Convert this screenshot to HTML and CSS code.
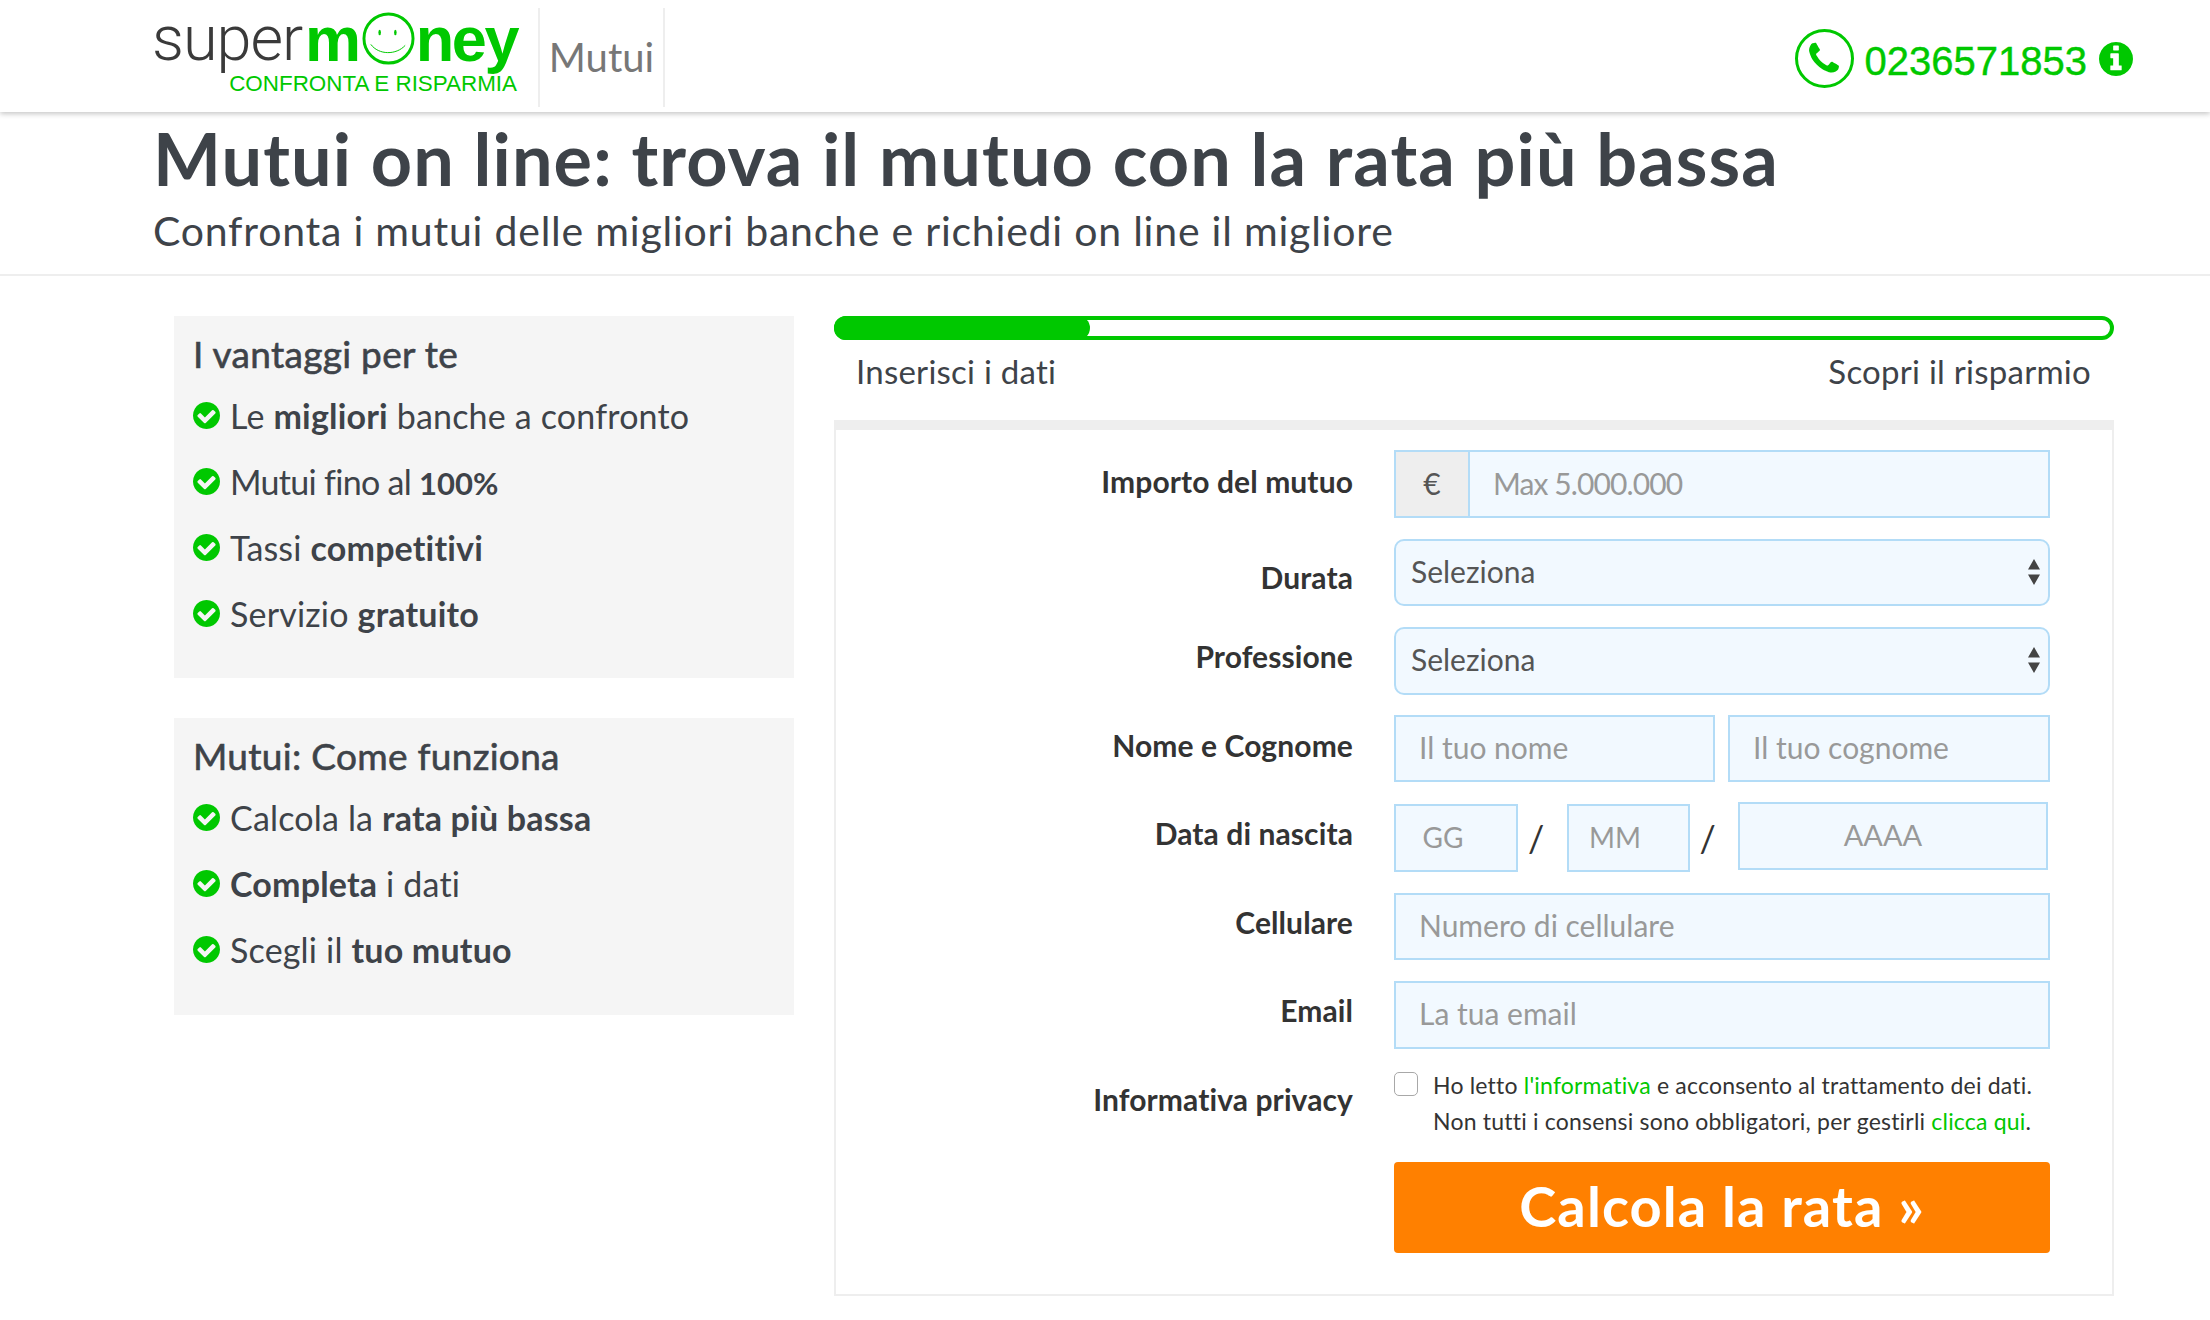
FILE: index.html
```html
<!DOCTYPE html>
<html lang="it">
<head>
<meta charset="utf-8">
<title>Mutui on line</title>
<link rel="stylesheet" href="styles.css">
</head>
<body>
<header class="topbar">
  <div class="brand">
    <div class="logo">
      <div class="logo-word">
        <span class="logo-super">super</span><span class="logo-green">m</span><svg class="smiley" viewBox="0 0 54 54" aria-hidden="true"><circle cx="27" cy="27" r="25" fill="none" stroke="#00c800" stroke-width="3"/><ellipse cx="18" cy="21" rx="1.3" ry="2.8" fill="#00c800"/><ellipse cx="34" cy="21" rx="1.3" ry="2.8" fill="#00c800"/><path d="M9 33 C17 44 35 44 44 34" fill="none" stroke="#00c800" stroke-width="1"/></svg><span class="logo-green logo-ney">ney</span>
      </div>
      <div class="logo-claim">CONFRONTA E RISPARMIA</div>
    </div>
    <div class="section-name">Mutui</div>
  </div>
  <div class="phone">
    <span class="phone-ring"><svg viewBox="0 0 1792 1792" aria-hidden="true"><path d="M1600 1240q0 27-10 70.5t-21 68.5q-21 50-122 106-94 51-186 51-27 0-53-3.5t-57.5-12.5-47-14.5-55.5-20.5-49-18q-98-35-175-83-127-79-264-216t-216-264q-48-77-83-175-3-9-18-49t-20.5-55.5-14.5-47-12.5-57.5-3.5-53q0-92 51-186 56-101 106-122 25-11 68.5-21t70.5-10q14 0 21 3 18 6 53 76 11 19 30 54t35 63.5 31 53.5q3 4 17.5 25t21.5 35.5 7 28.5q0 20-28.5 50t-62 55-62 53-28.5 46q0 9 5 22.5t8.5 20.5 14 24 11.5 19q76 137 174 235t235 174q2 1 19 11.5t24 14 20.5 8.5 22.5 5q18 0 46-28.5t53-62 55-62 50-28.5q14 0 28.5 7t35.5 21.5 25 17.5q25 15 53.5 31t63.5 35 54 30q70 35 76 53 3 7 3 21z"/></svg></span>
    <span class="phone-number">0236571853</span>
    <svg class="phone-info" viewBox="128 128 1536 1536" aria-hidden="true"><path d="M1152 1376v-160q0-14-9-23t-23-9h-96v-512q0-14-9-23t-23-9h-320q-14 0-23 9t-9 23v160q0 14 9 23t23 9h96v320h-96q-14 0-23 9t-9 23v160q0 14 9 23t23 9h448q14 0 23-9t9-23zm-128-896v-160q0-14-9-23t-23-9h-192q-14 0-23 9t-9 23v160q0 14 9 23t23 9h192q14 0 23-9t9-23zm640 416q0 209-103 385.5t-279.5 279.5-385.5 103-385.5-103-279.5-279.5-103-385.5 103-385.5 279.5-279.5 385.5-103 385.5 103 279.5 279.5 103 385.5z"/></svg>
  </div>
</header>

<section class="hero">
  <h1>Mutui on line: trova il mutuo con la rata più bassa</h1>
  <p>Confronta i mutui delle migliori banche e richiedi on line il migliore</p>
</section>

<main class="main">
  <aside class="sidebar">
    <div class="box box-benefits">
      <h2>I vantaggi per te</h2>
      <ul>
        <li><svg class="check" viewBox="128 128 1536 1536" aria-hidden="true"><path d="M1412 734q0-28-18-46l-91-90q-19-19-45-19t-45 19l-408 407-226-226q-19-19-45-19t-45 19l-91 90q-18 18-18 46 0 27 18 45l362 362q19 19 45 19 27 0 46-19l543-543q18-18 18-45zm252 162q0 209-103 385.5t-279.5 279.5-385.5 103-385.5-103-279.5-279.5-103-385.5 103-385.5 279.5-279.5 385.5-103 385.5 103 279.5 279.5 103 385.5z"/></svg><span>Le <b>migliori</b> banche a confronto</span></li>
        <li><svg class="check" viewBox="128 128 1536 1536" aria-hidden="true"><path d="M1412 734q0-28-18-46l-91-90q-19-19-45-19t-45 19l-408 407-226-226q-19-19-45-19t-45 19l-91 90q-18 18-18 46 0 27 18 45l362 362q19 19 45 19 27 0 46-19l543-543q18-18 18-45zm252 162q0 209-103 385.5t-279.5 279.5-385.5 103-385.5-103-279.5-279.5-103-385.5 103-385.5 279.5-279.5 385.5-103 385.5 103 279.5 279.5 103 385.5z"/></svg><span class="tight">Mutui fino al <b class="num">100%</b></span></li>
        <li><svg class="check" viewBox="128 128 1536 1536" aria-hidden="true"><path d="M1412 734q0-28-18-46l-91-90q-19-19-45-19t-45 19l-408 407-226-226q-19-19-45-19t-45 19l-91 90q-18 18-18 46 0 27 18 45l362 362q19 19 45 19 27 0 46-19l543-543q18-18 18-45zm252 162q0 209-103 385.5t-279.5 279.5-385.5 103-385.5-103-279.5-279.5-103-385.5 103-385.5 279.5-279.5 385.5-103 385.5 103 279.5 279.5 103 385.5z"/></svg><span>Tassi <b>competitivi</b></span></li>
        <li><svg class="check" viewBox="128 128 1536 1536" aria-hidden="true"><path d="M1412 734q0-28-18-46l-91-90q-19-19-45-19t-45 19l-408 407-226-226q-19-19-45-19t-45 19l-91 90q-18 18-18 46 0 27 18 45l362 362q19 19 45 19 27 0 46-19l543-543q18-18 18-45zm252 162q0 209-103 385.5t-279.5 279.5-385.5 103-385.5-103-279.5-279.5-103-385.5 103-385.5 279.5-279.5 385.5-103 385.5 103 279.5 279.5 103 385.5z"/></svg><span>Servizio <b>gratuito</b></span></li>
      </ul>
    </div>
    <div class="box box-how">
      <h2>Mutui: Come funziona</h2>
      <ul>
        <li><svg class="check" viewBox="128 128 1536 1536" aria-hidden="true"><path d="M1412 734q0-28-18-46l-91-90q-19-19-45-19t-45 19l-408 407-226-226q-19-19-45-19t-45 19l-91 90q-18 18-18 46 0 27 18 45l362 362q19 19 45 19 27 0 46-19l543-543q18-18 18-45zm252 162q0 209-103 385.5t-279.5 279.5-385.5 103-385.5-103-279.5-279.5-103-385.5 103-385.5 279.5-279.5 385.5-103 385.5 103 279.5 279.5 103 385.5z"/></svg><span>Calcola la <b>rata più bassa</b></span></li>
        <li><svg class="check" viewBox="128 128 1536 1536" aria-hidden="true"><path d="M1412 734q0-28-18-46l-91-90q-19-19-45-19t-45 19l-408 407-226-226q-19-19-45-19t-45 19l-91 90q-18 18-18 46 0 27 18 45l362 362q19 19 45 19 27 0 46-19l543-543q18-18 18-45zm252 162q0 209-103 385.5t-279.5 279.5-385.5 103-385.5-103-279.5-279.5-103-385.5 103-385.5 279.5-279.5 385.5-103 385.5 103 279.5 279.5 103 385.5z"/></svg><span><b>Completa</b> i dati</span></li>
        <li><svg class="check" viewBox="128 128 1536 1536" aria-hidden="true"><path d="M1412 734q0-28-18-46l-91-90q-19-19-45-19t-45 19l-408 407-226-226q-19-19-45-19t-45 19l-91 90q-18 18-18 46 0 27 18 45l362 362q19 19 45 19 27 0 46-19l543-543q18-18 18-45zm252 162q0 209-103 385.5t-279.5 279.5-385.5 103-385.5-103-279.5-279.5-103-385.5 103-385.5 279.5-279.5 385.5-103 385.5 103 279.5 279.5 103 385.5z"/></svg><span>Scegli il <b>tuo mutuo</b></span></li>
      </ul>
    </div>
  </aside>

  <div class="content">
    <div class="progress"><div class="progress-fill"></div></div>
    <div class="steps"><span>Inserisci i dati</span><span>Scopri il risparmio</span></div>
    <form class="panel">
      <div class="row">
        <label class="row-label row-label-first">Importo del mutuo</label>
        <div class="addon-group">
          <span class="addon">€</span>
          <input class="field field-addon" placeholder="Max 5.000.000">
        </div>
      </div>
      <div class="row">
        <label class="row-label row-label-low">Durata</label>
        <div class="select-wrap">
          <select class="field field-select"><option>Seleziona</option></select>
          <svg class="select-arrows" viewBox="0 0 14 26" aria-hidden="true"><path d="M7 0 L13 10.5 H1 Z M7 26 L1 15.5 H13 Z"/></svg>
        </div>
      </div>
      <div class="row">
        <label class="row-label">Professione</label>
        <div class="select-wrap">
          <select class="field field-select"><option>Seleziona</option></select>
          <svg class="select-arrows" viewBox="0 0 14 26" aria-hidden="true"><path d="M7 0 L13 10.5 H1 Z M7 26 L1 15.5 H13 Z"/></svg>
        </div>
      </div>
      <div class="row">
        <label class="row-label">Nome e Cognome</label>
        <div class="name-pair">
          <input class="field" placeholder="Il tuo nome">
          <input class="field" placeholder="Il tuo cognome">
        </div>
      </div>
      <div class="row">
        <label class="row-label">Data di nascita</label>
        <div class="date-group">
          <input class="field field-day" placeholder="GG">
          <span class="slash">/</span>
          <input class="field field-month" placeholder="MM">
          <span class="slash">/</span>
          <input class="field field-year" placeholder="AAAA">
        </div>
      </div>
      <div class="row">
        <label class="row-label">Cellulare</label>
        <input class="field" placeholder="Numero di cellulare">
      </div>
      <div class="row">
        <label class="row-label">Email</label>
        <input class="field" placeholder="La tua email">
      </div>
      <div class="row row-consent">
        <label class="row-label">Informativa privacy</label>
        <div class="consent">
          <input class="tick" type="checkbox">
          <p>Ho letto <a href="#">l'informativa</a> e acconsento al trattamento dei dati.<br>Non tutti i consensi sono obbligatori, per gestirli <a href="#">clicca qui</a>.</p>
        </div>
      </div>
      <div class="row row-submit">
        <span></span>
        <button class="submit" type="button">Calcola la rata »</button>
      </div>
    </form>
  </div>
</main>
</body>
</html>
```
FILE: styles.css
```css
* { box-sizing: border-box; }
html, body { margin: 0; padding: 0; }
body { width: 2210px; height: 1320px; overflow: hidden; background: #fff; color: #3e4349; font-family: Lato, "Open Sans", sans-serif; }

.topbar { height: 112px; display: flex; justify-content: space-between; align-items: flex-start; padding: 0 77px 0 153px; box-shadow: 0 2px 5px rgba(0,0,0,.22); background: #fff; position: relative; }
.brand { display: flex; align-items: flex-start; }
.logo { width: 385px; padding-top: 12px; }
.logo-word { display: flex; align-items: flex-start; height: 54px; font-family: "Liberation Sans", sans-serif; line-height: 54px; }
.logo-super { font-family: Roboto, sans-serif; font-weight: 300; font-size: 63px; color: #3a3a3a; width: 152px; letter-spacing: -1px; margin-left: -1px; margin-right: 1px; }
.logo-green { font-weight: 700; font-size: 63px; color: #00c800; letter-spacing: -.3px; }
.logo-ney { letter-spacing: -2.4px; margin-left: 1px; }
.smiley { width: 53px; height: 53px; flex: none; margin: 0 0 0 1px; }
.logo-claim { font-family: "Liberation Sans", sans-serif; font-size: 22.4px; line-height: 24px; color: #00c800; text-align: right; width: 364px; margin-top: 6px; }
.section-name { height: 99px; margin-top: 8px; width: 127px; border-left: 2px solid #eee; border-right: 2px solid #eee; font-size: 40px; line-height: 99px; color: #777; text-align: center; }
.phone { display: flex; align-items: center; margin-top: 29px; }
.phone-ring { width: 59px; height: 59px; border: 3.5px solid #00c800; border-radius: 50%; display: flex; align-items: center; justify-content: center; margin-right: 11px; }
.phone-ring svg { width: 38px; height: 38px; fill: #00c800; }
.phone-number { font-family: "Liberation Sans", sans-serif; font-size: 40px; line-height: 46px; padding-top: 4px; color: #00c800; margin-right: 12px; -webkit-text-stroke: .4px #00c800; }
.phone-info { width: 34px; height: 34px; fill: #00c800; }

.hero { height: 164px; padding: 0 0 0 153px; border-bottom: 2px solid #eee; }
.hero h1 { margin: 0; padding-top: 11px; font-size: 72px; line-height: 70px; font-weight: 700; color: #3e4349; letter-spacing: 1.1px; }
.hero p { margin: 0; padding-top: 14px; font-size: 41px; line-height: 48px; color: #3e4349; letter-spacing: .78px; }

.main { display: flex; padding: 40px 96px 0 174px; gap: 40px; }
.sidebar { width: 620px; flex: none; }
.box { background: #f5f5f5; padding: 15px 19px 0; margin-bottom: 40px; }
.box-benefits { height: 362px; }
.box-how { height: 297px; }
.box h2 { margin: 0; font-size: 37px; line-height: 46px; font-weight: 400; letter-spacing: .3px; -webkit-text-stroke: .6px #3e4349; color: #3e4349; }
.box ul { list-style: none; margin: 5px 0 0; padding: 0; }
.box li { display: flex; align-items: center; height: 66px; font-size: 34px; letter-spacing: .18px; color: #3e4349; }
.box b { font-weight: 700; }
.box .tight { letter-spacing: -.7px; }
.box .num { font-size: 31px; letter-spacing: 0; }
.check { width: 27px; height: 27px; fill: #00c800; flex: none; margin-right: 10px; }

.content { width: 1280px; flex: none; }
.progress { height: 24px; border: 4px solid #00c800; border-radius: 12px; position: relative; }
.progress-fill { width: 256px; height: 24px; margin: -4px 0 0 -4px; background: #00c800; border-radius: 12px; }
.steps { display: flex; justify-content: space-between; padding: 0 23px 0 22px; height: 80px; align-items: flex-start; font-size: 33px; line-height: 63px; letter-spacing: .25px; color: #3e4349; }
.panel { border: 2px solid #eee; border-top: 10px solid #eee; height: 876px; padding: 20px 62px 0 0; display: flex; flex-direction: column; gap: 21px; }

.row { display: grid; grid-template-columns: 517px 656px; column-gap: 41px; height: 67.5px; }
.row-label { font-size: 30px; font-weight: 700; line-height: 36px; text-align: right; color: #333; padding-top: 11px; letter-spacing: .1px; }
.row-label-first { padding-top: 13px; }
.row-label-low { padding-top: 20px; }
.field { width: 100%; height: 100%; border: 2px solid #b3dcf7; background: #f2f9ff; font-family: Lato, sans-serif; font-size: 30px; color: #555; padding: 0 23px 3px; border-radius: 0; outline: none; display: block; margin: 0; }
.field::placeholder { color: #999; opacity: 1; }

.addon-group { display: flex; height: 100%; }
.addon { width: 74px; flex: none; background: #eee; border: 2px solid #b3dcf7; border-right: 0; text-align: center; font-size: 30px; line-height: 62px; color: #555; }
.field-addon { flex: 1; width: auto; letter-spacing: -.9px; padding: 0 23px 1px; }

.select-wrap { position: relative; height: 100%; }
.field-select { appearance: none; -webkit-appearance: none; border-radius: 10px; padding: 0 15px 3px; color: #555; }
.select-arrows { position: absolute; right: 9px; top: 20px; width: 14px; height: 26px; fill: #444; pointer-events: none; }

.name-pair { display: grid; grid-template-columns: 321px 322px; gap: 13px; height: 100%; margin-top: -1px; }

.date-group { display: flex; height: 100%; }
.field-day, .field-month { width: 124px; flex: none; text-align: center; padding: 0 26px 3px 0; font-size: 28px; }
.field-month { width: 123px; }
.field-year { width: 310px; flex: none; text-align: center; padding: 0 20px 3px 0; margin-top: -2px; height: 68px; font-size: 29px; }
.slash { width: 48.5px; flex: none; padding-right: 12px; text-align: center; font-size: 36px; line-height: 68px; color: #333; }

.row-consent { height: 80px; }
.consent { display: flex; align-items: flex-start; padding-top: 2px; }
.tick { appearance: none; -webkit-appearance: none; width: 24px; height: 24px; margin: 0 15px 0 0; border: 1.5px solid #a8a8a8; border-radius: 5px; background: #fff; flex: none; }
.consent p { margin: -5px 0 0; font-size: 23px; line-height: 36px; letter-spacing: .2px; color: #333; white-space: nowrap; }
.consent a { color: #00c800; text-decoration: none; }

.row-submit { height: 91px; margin-top: -8.5px; }
.submit { width: 100%; height: 100%; background: #ff8000; border: 0; border-radius: 4px; color: #fff; font-family: Lato, sans-serif; font-weight: 700; font-size: 56px; letter-spacing: 1.1px; padding: 0 0 4px; }
```
